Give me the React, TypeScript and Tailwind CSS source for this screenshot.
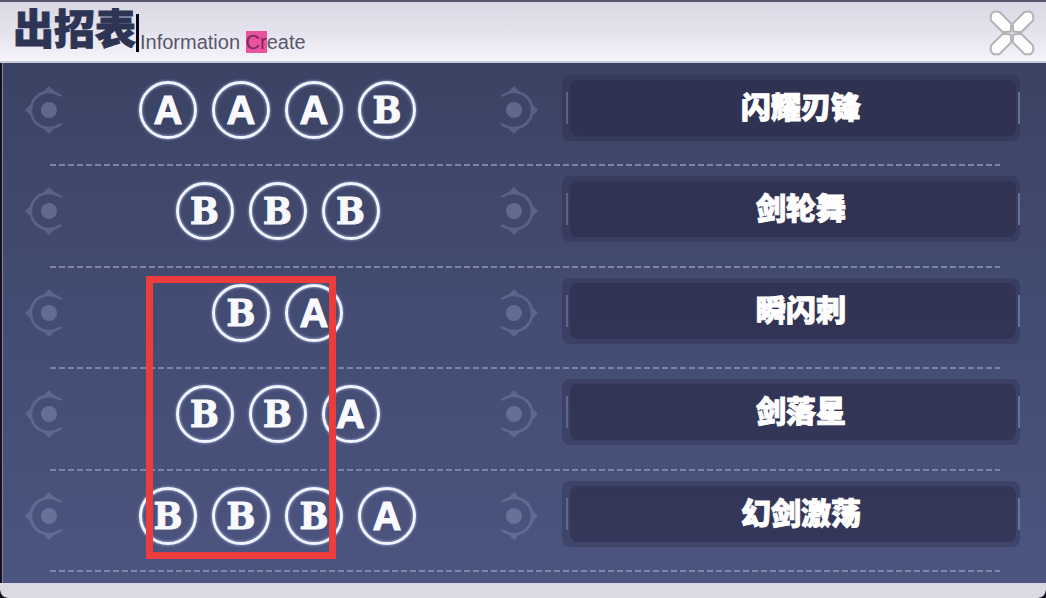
import clsx from "clsx"

type Key = "A" | "B"

interface Move {
  name: string
  keys: Key[]
}

const moves: Move[] = [
  { name: "闪耀刃锋", keys: ["A", "A", "A", "B"] },
  { name: "剑轮舞", keys: ["B", "B", "B"] },
  { name: "瞬闪刺", keys: ["B", "A"] },
  { name: "剑落星", keys: ["B", "B", "A"] },
  { name: "幻剑激荡", keys: ["B", "B", "B", "A"] },
]

function Crosshair({ flipped = false }: { flipped?: boolean }) {
  return (
    <svg
      viewBox="-24 -24 48 48"
      className={clsx("h-12 w-12 shrink-0 text-[#a9b3d6]", flipped && "-scale-x-100")}
      aria-hidden="true"
    >
      <path
        d="M13 -15 L10 -16.5 A20 20 0 0 0 5 -19 L0 -24 L-5 -19 A20 20 0 0 0 -19 -5 L-24 0 L-19 5 A20 20 0 0 0 -5 19 L0 24 L5 19 A20 20 0 0 0 13 15 L13 13 L9 14.2 A16.8 16.8 0 1 1 9 -14.2 L13 -13 Z"
        fill="currentColor"
        opacity="0.25"
      />
      <circle r="8" fill="currentColor" opacity="0.32" />
    </svg>
  )
}

function KeyBadge({ value }: { value: Key }) {
  return (
    <span
      className={clsx(
        "flex h-[58px] w-[58px] shrink-0 items-center justify-center rounded-full border-[3px] border-[#f0f4ff] font-bold leading-none text-[#f8faff] shadow-[0_0_3px_#a9b5ea,inset_0_0_3px_#a9b5ea] [-webkit-text-stroke:1px_#f8faff]",
        value === "A"
          ? "font-['Liberation_Sans',sans-serif] text-[40px]"
          : "font-['DejaVu_Serif_Condensed','DejaVu_Serif',serif] text-[38px]",
      )}
    >
      {value}
    </span>
  )
}

function MoveRow({ name, keys }: Move) {
  return (
    <li className="flex min-h-[100px] flex-1 flex-col justify-between">
      <div className="grid grid-cols-[513fr_458fr] gap-6 pt-[10px] pr-[26px] pl-[22px]">
        <div className="flex items-center justify-between pt-1">
          <Crosshair />
          <div className="flex gap-[15px] pr-2">
            {keys.map((key, i) => (
              <KeyBadge key={i} value={key} />
            ))}
          </div>
          <Crosshair flipped />
        </div>
        <div className="flex h-[66px] rounded-lg bg-[#2a2748]/35 py-[5px]">
          <div className="my-3 ml-1 w-0.5 bg-[#8c92b8]/45" />
          <div className="mx-0.5 flex flex-1 items-center justify-center rounded-lg bg-[#2a2a48]/50 pl-4">
            <h2 className="text-[30px] leading-none font-black text-white [-webkit-text-stroke:1px_white]">
              {name}
            </h2>
          </div>
          <div className="my-3 w-0.5 bg-[#8c92b8]/60" />
        </div>
      </div>
      <div className="mr-[46px] ml-[47px] h-0.5 bg-[repeating-linear-gradient(to_right,#7d84a8_0px,#7d84a8_6px,transparent_6px,transparent_9px)]" />
    </li>
  )
}

export default function App() {
  return (
    <div className="min-h-screen bg-[#15121f] font-['Liberation_Sans','Noto_Sans_CJK_SC',sans-serif]">
      <div className="flex min-h-screen flex-col overflow-hidden rounded-b-lg">
        <header className="flex h-[63px] items-start justify-between border-t-2 border-b-2 border-t-[#5b566b] border-b-[#c9c9da] bg-linear-to-b from-[#d8d7e3] via-[#e4e3ed] to-[#f5f4fb] pr-[11px] pl-[13px]">
          <div className="flex items-start">
            <h1 className="mt-2 text-[41px] leading-10 font-black text-[#2d3454] [-webkit-text-stroke:1px_#2d3454]">
              出招表
            </h1>
            <span className="mt-3 h-[38px] w-[3px] bg-[#0c0a18]" />
            <p className="mt-7 ml-px text-xl leading-6 text-[#58576c]">
              Information <mark className="bg-[#e9539c] text-[#7b2460]">Cr</mark>eate
            </p>
          </div>
          <button type="button" aria-label="Close" className="mt-2 cursor-pointer">
            <svg viewBox="-23 -23 46 46" className="h-[46px] w-[46px]">
              <g fill="#fff" stroke="#b4b3b8" strokeWidth="2" strokeLinejoin="round">
                {[45, 135, 225, 315].map((angle) => (
                  <path
                    key={angle}
                    transform={`rotate(${angle})`}
                    d="M2 0 L7 -6 H24 L28 -2 V2 L24 6 H7 Z"
                  />
                ))}
              </g>
            </svg>
          </button>
        </header>

        <main className="relative ml-0.5 flex flex-1 flex-col border-l border-[#85859c] bg-linear-to-b from-[#3b4364] to-[#4b5580] pt-0.5 pb-[11px]">
          <ul className="flex flex-1 flex-col">
            {moves.map((move) => (
              <MoveRow key={move.name} {...move} />
            ))}
          </ul>
          {/* highlighted part of the combos */}
          <div className="pointer-events-none absolute top-[213px] left-[143px] h-[283px] w-[190px] border-[7px] border-[#ec3c3c]" />
        </main>

        <footer className="h-[15px] rounded-b-lg bg-[#dad9e4]" />
      </div>
    </div>
  )
}
